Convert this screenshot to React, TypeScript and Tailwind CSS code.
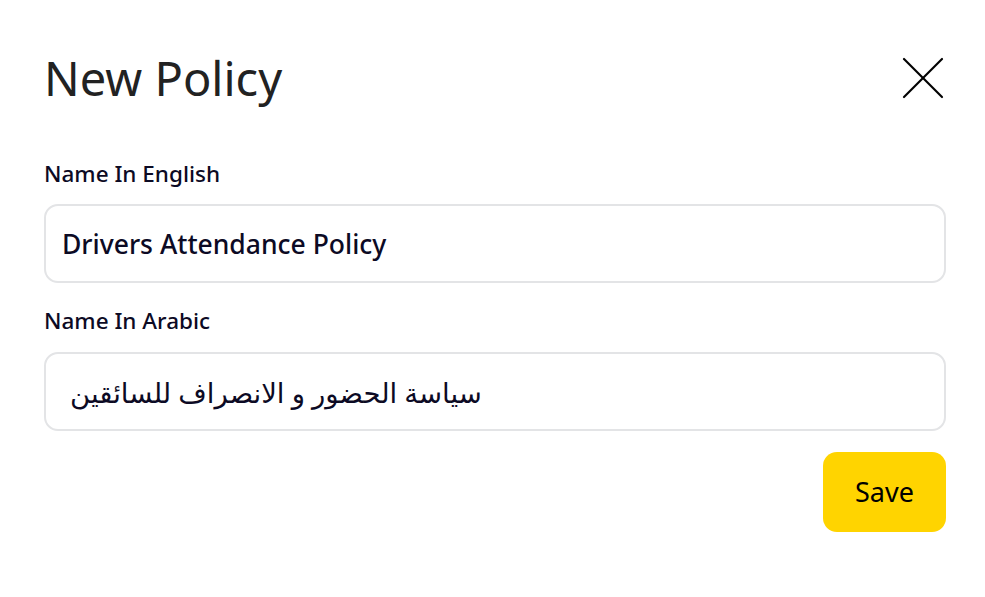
import React from 'react';

const App: React.FC = () => {
  return (
    <div className="min-h-screen bg-white pl-[44px] pr-[39px] pt-[50px] font-['Noto_Sans','DejaVu_Sans',sans-serif]">
      <div className="flex items-center justify-between h-[56px]">
        <h1 className="text-[47px] leading-none text-[#222222] font-normal">New Policy</h1>
        <button className="w-[44px] h-[44px] flex items-center justify-center mr-[1px]">
          <svg width="42" height="42" viewBox="0 0 42 42" fill="none" stroke="#000" strokeWidth="2.2" strokeLinecap="round">
            <path d="M2 2 L40 40" />
            <path d="M40 2 L2 40" />
          </svg>
        </button>
      </div>

      <form className="mt-[54px] flex flex-col">
        <label className="text-[22.5px] leading-[28px] font-medium text-[#0c0a24]">Name In English</label>
        <div className="mt-[16px] h-[79px] rounded-[14px] border-2 border-[#e3e4e6] flex items-center px-[16px] pt-[3px]">
          <span className="text-[26.5px] font-medium text-[#0c0a24]">Drivers Attendance Policy</span>
        </div>

        <label className="mt-[24px] text-[22.5px] leading-[28px] font-medium text-[#0c0a24]">Name In Arabic</label>
        <div className="mt-[17px] h-[79px] rounded-[14px] border-2 border-[#e3e4e6] flex items-center px-[24px] pt-[2px]">
          <span dir="rtl" className="text-[27.5px] text-[#0c0a24]">سياسة الحضور و الانصراف للسائقين</span>
        </div>

        <div className="mt-[21px] flex justify-end">
          <button type="button" className="w-[123px] h-[80px] rounded-[14px] bg-[#ffd400] text-[27px] text-black">
            Save
          </button>
        </div>
      </form>
    </div>
  );
};

export default App;
